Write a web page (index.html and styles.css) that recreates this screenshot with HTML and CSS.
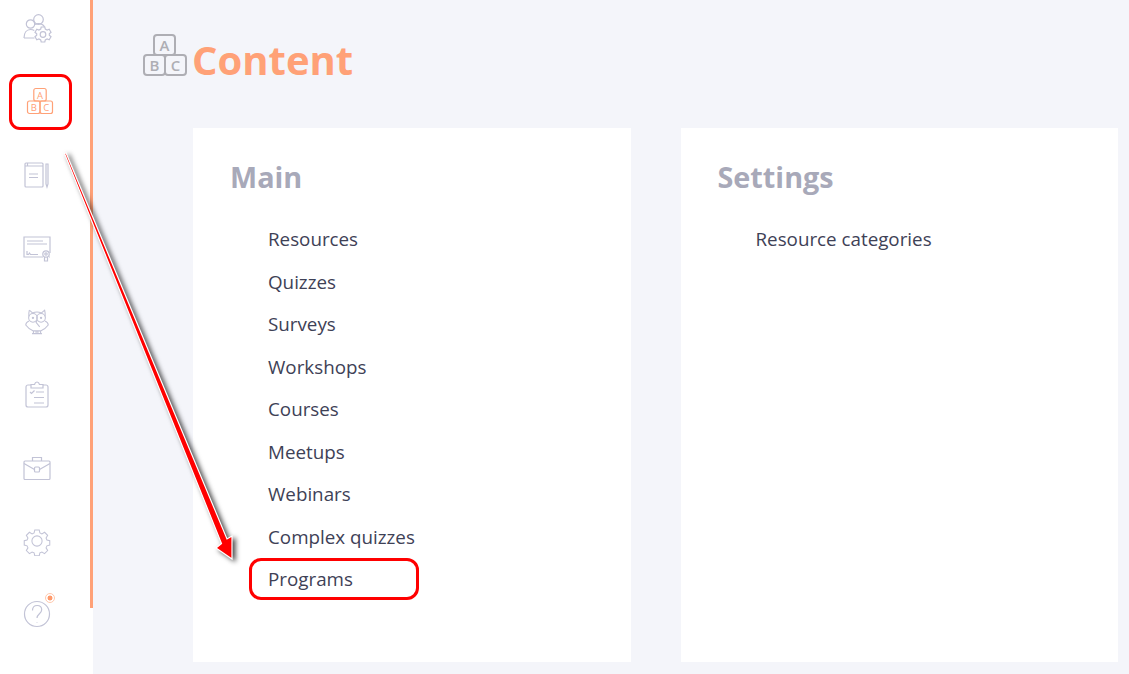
FILE: index.html
```html
<!DOCTYPE html>
<html lang="en">
<head>
  <meta charset="UTF-8" />
  <title>Content</title>
  <link rel="stylesheet" href="styles.css">
</head>
<body>
  <div class="app">
    <nav class="sidebar">
      <a class="nav-icon">
        <svg viewBox="0 0 30 30" class="icon">
          <circle cx="16.500" cy="6.500" r="4.800"/>
          <circle cx="8.500" cy="11" r="4.200"/>
          <path d="M2 25c0-5 2.500-8.500 6.500-8.500 1.500 0 2.800.4 3.800 1.100M2 25h10.500M13 11.500c1-.6 2.200-.9 3.500-.9 3 0 5 1.200 6 3.400"/>
          <circle cx="21" cy="21.500" r="2.800"/>
          <path d="M19.200 14h3.600l.5 2.100 1.800.9 2.100-.7 1.800 3-1.700 1.400v1.600l1.700 1.400-1.800 3-2.100-.7-1.800.9-.5 2.100h-3.600l-.5-2.100-1.800-.9-2.100.7-1.800-3 1.700-1.400v-1.600l-1.700-1.400 1.800-3 2.100.7 1.800-.9z"/>
        </svg>
      </a>
      <a class="nav-icon active">
        <svg viewBox="0 0 30 30" class="icon">
          <rect x="8.800" y="2.500" width="12.400" height="12.500" rx="2"/>
          <rect x="2.500" y="15" width="12.500" height="12.500" rx="2"/>
          <rect x="15" y="15" width="12.500" height="12.500" rx="2"/>
          <text x="15" y="12.800" class="block-letter">A</text>
          <text x="8.700" y="25.300" class="block-letter">B</text>
          <text x="21.300" y="25.300" class="block-letter">C</text>
        </svg>
      </a>
      <a class="nav-icon">
        <svg viewBox="0 0 30 30" class="icon">
          <rect x="3" y="3" width="18" height="24" rx="1"/>
          <path d="M3 6h18M7 14h9M7 17.500h9M5.500 3v3"/>
          <path d="M24 4h2v20l-1 3-1-3z"/>
        </svg>
      </a>
      <a class="nav-icon">
        <svg viewBox="0 0 30 30" class="icon">
          <path d="M21 24H2V4h26v16M28 24h-1"/>
          <path d="M5 8h16M5 11h20M5 18v3.500h1.500l1-1.500 1 1.500H16"/>
          <circle cx="24" cy="21" r="3.200"/>
          <circle cx="24" cy="21" r="1.200"/>
          <path d="M22.500 24v4h3v-4"/>
        </svg>
      </a>
      <a class="nav-icon">
        <svg viewBox="0 0 30 30" class="icon">
          <g transform="translate(1.500 1.500) scale(.9)">
            <path d="M6.500 3l3.500 3c3-1.200 7-1.200 10 0l3.500-3c.8 3 .8 5 .5 7"/>
            <path d="M6.500 3c-.8 3-.8 5-.5 7"/>
            <circle cx="10.500" cy="11.500" r="4.800"/>
            <circle cx="19.500" cy="11.500" r="4.800"/>
            <circle cx="10.500" cy="11.500" r=".7"/>
            <circle cx="19.500" cy="11.500" r=".7"/>
            <path d="M6 15c-2 1-3.500 2.500-3.500 4.500 2 3 5 5 8.500 6.500h8c3.500-1.500 6.500-3.500 8.500-6.500 0-2-1.500-3.500-3.500-4.500M15 14l-1 2.500 4 5M11 26v3M14 26v3M16 26v3M19 26v3M9.500 29h6M14.500 29h6"/>
          </g>
        </svg>
      </a>
      <a class="nav-icon">
        <svg viewBox="0 0 30 30" class="icon">
          <path d="M9 6H6a2 2 0 0 0-2 2v18a2 2 0 0 0 2 2h18a2 2 0 0 0 2-2V8a2 2 0 0 0-2-2h-3"/>
          <path d="M9 9V5.500h3.500C13 3.800 14 3 15 3s2 .8 2.500 2.500H21V9z"/>
          <path d="M8 13l1.500 1.500L12.500 11.500M14 13h8M12 18.500h10M12 24h10"/>
        </svg>
      </a>
      <a class="nav-icon">
        <svg viewBox="0 0 30 30" class="icon">
          <rect x="2" y="8" width="26" height="18.500" rx="1"/>
          <path d="M10.500 8V4.500h9V8M2 10.500l10.500 6M28 10.500l-10.500 6"/>
          <rect x="12.500" y="14" width="5" height="5" rx="1"/>
        </svg>
      </a>
      <a class="nav-icon">
        <svg viewBox="0 0 30 30" class="icon">
          <g transform="translate(1.800 1.800) scale(.88)">
            <circle cx="15" cy="15" r="5.800"/>
            <path d="M12.500 2.500h5l.8 3.400 2.300 1 3-1.800 3.500 3.500-1.800 3 1 2.300 3.200.8v5l-3.200.8-1 2.300 1.800 3-3.500 3.500-3-1.800-2.300 1-.8 3.400h-5l-.8-3.400-2.300-1-3 1.800-3.500-3.500 1.800-3-1-2.300-3.200-.8v-5l3.200-.8 1-2.300-1.800-3L6.400 5.100l3 1.800 2.300-1z"/>
          </g>
        </svg>
      </a>
      <a class="nav-icon help">
        <svg viewBox="0 0 30 30" class="icon">
          <circle cx="15" cy="15" r="12.500"/>
          <path d="M10.500 11.500c0-3 2-5 4.700-5s4.500 1.800 4.500 4.300c0 3.700-4.700 4.200-4.700 8.200M15 23v.6"/>
        </svg>
        <span class="badge"></span>
      </a>
    </nav>

    <main class="content">
      <header class="page-head">
        <svg viewBox="0 0 44 44" class="head-icon">
          <rect x="11" y="2" width="21" height="20" rx="3"/>
          <rect x="1" y="22" width="21" height="20" rx="3"/>
          <rect x="22" y="22" width="21" height="20" rx="3"/>
          <text x="21.500" y="18" class="head-letter">A</text>
          <text x="11.500" y="38" class="head-letter">B</text>
          <text x="32.500" y="38" class="head-letter">C</text>
        </svg>
        <h1 class="page-title">Content</h1>
      </header>

      <div class="panels">
        <section class="panel">
          <h2 class="panel-title">Main</h2>
          <ul class="link-list">
            <li>Resources</li>
            <li>Quizzes</li>
            <li>Surveys</li>
            <li>Workshops</li>
            <li>Courses</li>
            <li>Meetups</li>
            <li>Webinars</li>
            <li>Complex quizzes</li>
            <li>Programs</li>
          </ul>
        </section>
        <section class="panel">
          <h2 class="panel-title">Settings</h2>
          <ul class="link-list">
            <li>Resource categories</li>
          </ul>
        </section>
      </div>
    </main>
  </div>

  <!-- Annotations drawn over the page -->
  <div class="mark mark-nav"></div>
  <div class="mark mark-programs"></div>
  <svg class="arrow" width="1129" height="674" viewBox="0 0 1129 674">
    <polygon points="64.500,153.500 66,152.800 227,539 232,536 232,559 216,548 221.500,543.500" />
  </svg>
</body>
</html>
```

FILE: styles.css
```css
* {
  box-sizing: border-box;
}

html, body {
  margin: 0;
  padding: 0;
  height: 674px;
  overflow: hidden;
}

body {
  background-color: #f4f5fa;
  font-family: "Open Sans", "Noto Sans", sans-serif;
}

.app {
  display: flex;
  height: 674px;
}

/* Orange strip stops above the last icon */
.sidebar {
  flex: 0 0 93px;
  display: flex;
  flex-direction: column;
  padding: 13px 19px 0 0;
  background: linear-gradient(#ffa177, #ffa177) right top / 3px 608px no-repeat, #fff;
}

.nav-icon {
  position: relative;
  flex: 0 0 73.3px;
  display: flex;
  justify-content: center;
}

.icon {
  width: 30px;
  height: 30px;
  fill: none;
  stroke: #c2c3d6;
  stroke-width: 1.2;
}

.nav-icon.active .icon {
  stroke: #ffa177;
  margin-left: 5px;
}

.block-letter {
  font-family: "Open Sans", sans-serif;
  font-size: 9.500px;
  text-anchor: middle;
  stroke: none;
  fill: #ffa177;
}

.badge {
  position: absolute;
  top: -6px;
  left: 45px;
  width: 10px;
  height: 10px;
  border-radius: 50%;
  background: radial-gradient(#ff9a6c 40%, #fff 48%);
  border: 1.500px solid #ffc9ae;
}

.content {
  flex: 1;
  padding: 34px 11px 0 50px;
}

.page-head {
  display: flex;
  align-items: center;
  gap: 5px;
  height: 42px;
}

.head-icon {
  width: 44px;
  height: 44px;
  fill: none;
  stroke: #aeaeb4;
  stroke-width: 2;
}

.head-letter {
  font-family: "Open Sans", sans-serif;
  font-size: 15px;
  font-weight: 600;
  text-anchor: middle;
  stroke: none;
  fill: #aeaeb4;
}

.page-title {
  margin: 8px 0 0;
  font-size: 40px;
  font-weight: 700;
  color: #ffa177;
}

.panels {
  display: flex;
  gap: 50px;
  margin: 52px 0 0 50px;
  height: 534px;
}

.panel {
  flex: 1;
  padding: 28px 37px 0 37px;
  background: #fff;
}

.panel-title {
  margin: 0 0 20px;
  font-size: 28.800px;
  line-height: 42px;
  font-weight: 700;
  color: #a8a9b9;
}

.link-list {
  list-style: none;
  margin: 0;
  padding: 0 0 0 38px;
}

.link-list li {
  height: 42.5px;
  line-height: 42.5px;
  font-size: 18.800px;
  color: #3e4156;
  white-space: nowrap;
}

.mark {
  position: absolute;
  border: 3px solid #f00;
}

.mark-nav {
  top: 74px;
  left: 9px;
  width: 63px;
  height: 56px;
  border-radius: 11px;
}

.mark-programs {
  top: 558px;
  left: 249px;
  width: 170px;
  height: 42px;
  border-radius: 12px;
}

.arrow {
  position: absolute;
  top: 0;
  left: 0;
  pointer-events: none;
  filter: drop-shadow(3px 2px 2.500px rgba(0, 0, 0, 0.7));
}

.arrow polygon {
  fill: #f00;
  stroke: #fff;
  stroke-width: 1.200;
}
```
